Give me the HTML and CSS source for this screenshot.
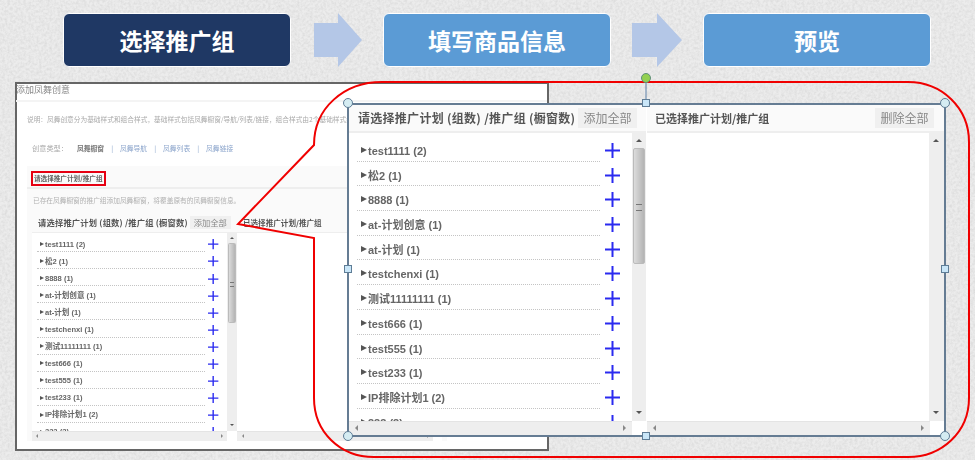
FILE: index.html
```html
<!DOCTYPE html>
<html lang="zh-CN">
<head>
<meta charset="utf-8">
<title>选择推广组</title>
<link rel="stylesheet" href="styles.css">
</head>
<body>
<div class="stage">
  <svg class="texture" width="975" height="460" aria-hidden="true">
    <filter id="grain"><feTurbulence type="fractalNoise" baseFrequency="0.38" numOctaves="3" seed="4"/><feColorMatrix values="0 0 0 0 0.5  0 0 0 0 0.5  0 0 0 0 0.5  0.6 0 0 0 -0.2"/></filter>
    <rect width="975" height="460" filter="url(#grain)"/>
  </svg>

  <nav class="steps">
    <div class="step step-active">选择推广组</div>
    <svg class="arrow arrow-a" viewBox="0 0 48 54" width="48" height="54"><path d="M0 10H24V0L48 27 24 54V44H0Z"/></svg>
    <div class="step">填写商品信息</div>
    <svg class="arrow arrow-b" viewBox="0 0 50 54" width="50" height="54"><path d="M0 10H25V0L50 27 25 54V44H0Z"/></svg>
    <div class="step">预览</div>
  </nav>

  <section class="window">
    <h1 class="window-title">添加凤舞创意</h1>
    <p class="desc">说明：凤舞创意分为基础样式和组合样式，基础样式包括凤舞橱窗/导航/列表/链接，组合样式由2个基础样式组合而成</p>
    <div class="types">
      <span class="type-label">创意类型：</span>
      <span class="type type-on">凤舞橱窗</span><i>|</i>
      <span class="type">凤舞导航</span><i>|</i>
      <span class="type">凤舞列表</span><i>|</i>
      <span class="type">凤舞链接</span>
    </div>
    <div class="section">
      <div class="section-head"><span class="section-title">请选择推广计划/推广组</span></div>
      <p class="note">已存在凤舞橱窗的推广组添加凤舞橱窗，将覆盖原有的凤舞橱窗信息。</p>
      <div class="dual dual-small">
        <div class="col col-left">
          <div class="col-head"><span class="col-title">请选择推广计划 (组数) /推广组 (橱窗数)</span><span class="btn">添加全部</span></div>
          <div class="col-body">
            <ul class="list">
              <li class="row"><span class="name">test1111 (2)</span><svg class="plus" viewBox="0 0 15 15"><path d="M0 7.5H15M7.5 0V15"/></svg></li>
              <li class="row"><span class="name">松2 (1)</span><svg class="plus" viewBox="0 0 15 15"><path d="M0 7.5H15M7.5 0V15"/></svg></li>
              <li class="row"><span class="name">8888 (1)</span><svg class="plus" viewBox="0 0 15 15"><path d="M0 7.5H15M7.5 0V15"/></svg></li>
              <li class="row"><span class="name">at-计划创意 (1)</span><svg class="plus" viewBox="0 0 15 15"><path d="M0 7.5H15M7.5 0V15"/></svg></li>
              <li class="row"><span class="name">at-计划 (1)</span><svg class="plus" viewBox="0 0 15 15"><path d="M0 7.5H15M7.5 0V15"/></svg></li>
              <li class="row"><span class="name">testchenxi (1)</span><svg class="plus" viewBox="0 0 15 15"><path d="M0 7.5H15M7.5 0V15"/></svg></li>
              <li class="row"><span class="name">测试11111111 (1)</span><svg class="plus" viewBox="0 0 15 15"><path d="M0 7.5H15M7.5 0V15"/></svg></li>
              <li class="row"><span class="name">test666 (1)</span><svg class="plus" viewBox="0 0 15 15"><path d="M0 7.5H15M7.5 0V15"/></svg></li>
              <li class="row"><span class="name">test555 (1)</span><svg class="plus" viewBox="0 0 15 15"><path d="M0 7.5H15M7.5 0V15"/></svg></li>
              <li class="row"><span class="name">test233 (1)</span><svg class="plus" viewBox="0 0 15 15"><path d="M0 7.5H15M7.5 0V15"/></svg></li>
              <li class="row"><span class="name">IP排除计划1 (2)</span><svg class="plus" viewBox="0 0 15 15"><path d="M0 7.5H15M7.5 0V15"/></svg></li>
              <li class="row"><span class="name">333 (3)</span><svg class="plus" viewBox="0 0 15 15"><path d="M0 7.5H15M7.5 0V15"/></svg></li>
            </ul>
            <div class="vbar"><span class="up"></span><span class="thumb"></span><span class="down"></span></div>
          </div>
          <div class="hrow"><div class="hbar"><span class="lt"></span><span class="rt"></span></div></div>
        </div>
        <div class="col col-right">
          <div class="col-head"><span class="col-title">已选择推广计划/推广组</span><span class="btn">删除全部</span></div>
          <div class="col-body">
            <div class="empty"></div>
            <div class="vbar"><span class="up"></span><span class="down"></span></div>
          </div>
          <div class="hrow"><div class="hbar"><span class="lt"></span><span class="rt"></span></div></div>
        </div>
      </div>
    </div>
  </section>

  <div class="selection">
    <div class="dual">
      <div class="col col-left">
        <div class="col-head"><span class="col-title">请选择推广计划 (组数) /推广组 (橱窗数)</span><span class="btn">添加全部</span></div>
        <div class="col-body">
          <ul class="list">
            <li class="row"><span class="name">test1111 (2)</span><svg class="plus" viewBox="0 0 15 15"><path d="M0 7.5H15M7.5 0V15"/></svg></li>
            <li class="row"><span class="name">松2 (1)</span><svg class="plus" viewBox="0 0 15 15"><path d="M0 7.5H15M7.5 0V15"/></svg></li>
            <li class="row"><span class="name">8888 (1)</span><svg class="plus" viewBox="0 0 15 15"><path d="M0 7.5H15M7.5 0V15"/></svg></li>
            <li class="row"><span class="name">at-计划创意 (1)</span><svg class="plus" viewBox="0 0 15 15"><path d="M0 7.5H15M7.5 0V15"/></svg></li>
            <li class="row"><span class="name">at-计划 (1)</span><svg class="plus" viewBox="0 0 15 15"><path d="M0 7.5H15M7.5 0V15"/></svg></li>
            <li class="row"><span class="name">testchenxi (1)</span><svg class="plus" viewBox="0 0 15 15"><path d="M0 7.5H15M7.5 0V15"/></svg></li>
            <li class="row"><span class="name">测试11111111 (1)</span><svg class="plus" viewBox="0 0 15 15"><path d="M0 7.5H15M7.5 0V15"/></svg></li>
            <li class="row"><span class="name">test666 (1)</span><svg class="plus" viewBox="0 0 15 15"><path d="M0 7.5H15M7.5 0V15"/></svg></li>
            <li class="row"><span class="name">test555 (1)</span><svg class="plus" viewBox="0 0 15 15"><path d="M0 7.5H15M7.5 0V15"/></svg></li>
            <li class="row"><span class="name">test233 (1)</span><svg class="plus" viewBox="0 0 15 15"><path d="M0 7.5H15M7.5 0V15"/></svg></li>
            <li class="row"><span class="name">IP排除计划1 (2)</span><svg class="plus" viewBox="0 0 15 15"><path d="M0 7.5H15M7.5 0V15"/></svg></li>
            <li class="row"><span class="name">333 (3)</span><svg class="plus" viewBox="0 0 15 15"><path d="M0 7.5H15M7.5 0V15"/></svg></li>
          </ul>
          <div class="vbar"><span class="up"></span><span class="thumb"></span><span class="down"></span></div>
        </div>
        <div class="hrow"><div class="hbar"><span class="lt"></span><span class="rt"></span></div></div>
      </div>
      <div class="col col-right">
        <div class="col-head"><span class="col-title">已选择推广计划/推广组</span><span class="btn">删除全部</span></div>
        <div class="col-body">
          <div class="empty"></div>
          <div class="vbar"><span class="up"></span><span class="down"></span></div>
        </div>
        <div class="hrow"><div class="hbar"><span class="lt"></span><span class="rt"></span></div></div>
      </div>
    </div>
  </div>

  <svg class="overlay" width="975" height="460" aria-hidden="true">
    <path class="callout" d="M238 224 314 238V398C314 432 340 457 374 457H908C942 457 969 432 969 398V142C969 108 942 82 908 82H382C344 82 314 108 314 145Z"/>
    <path class="rot-line" d="M646 83V103"/>
    <circle class="rot" cx="646" cy="78" r="4.5"/>
    <circle class="grip-c" cx="348" cy="103" r="4.5"/>
    <circle class="grip-c" cx="945" cy="103" r="4.5"/>
    <circle class="grip-c" cx="348" cy="436" r="4.5"/>
    <circle class="grip-c" cx="945" cy="436" r="4.5"/>
    <rect class="grip-s" x="642.5" y="99.5" width="7" height="7"/>
    <rect class="grip-s" x="344.5" y="265.5" width="7" height="7"/>
    <rect class="grip-s" x="941.5" y="265.5" width="7" height="7"/>
    <rect class="grip-s" x="642.5" y="432.5" width="7" height="7"/>
  </svg>
</div>
</body>
</html>
```
FILE: styles.css
```css
* { box-sizing: border-box; }
html, body { margin: 0; padding: 0; }
body { background: #e9e9e9; font-family: "Liberation Sans", "Noto Sans CJK SC", sans-serif; }
.stage { position: relative; width: 975px; height: 460px; overflow: hidden; background: #ececec; }
.texture { position: absolute; left: 0; top: 0; }

.steps { position: relative; display: flex; align-items: center; gap: 0; padding: 13px 0 0 63px; }
.step {
  width: 228px; height: 54px; display: flex; align-items: center; justify-content: center;
  background: #5b9bd5; border: 1px solid #fff; border-radius: 6px;
  color: #fff; font: 700 23px/1 "Noto Sans CJK SC", sans-serif;
}
.step-active { background: #1f3864; }
.arrow { flex: none; fill: #b4c7e7; }
.arrow-a { margin: 0 21px 0 23px; }
.arrow-b { margin: 0 21px; }

.window {
  position: absolute; left: 15px; top: 82px; width: 534px; height: 369px;
  background: #fff; border: 2px solid #666; filter: blur(.35px);
  font-family: "Noto Sans CJK SC", sans-serif;
}
.window-title { margin: 0 0 0 -1px; height: 18px; border-bottom: 2px solid #f4f4f4; font-size: 9px; font-weight: 400; line-height: 11px; color: #888; }
.desc { margin: 12px 0 0 10px; font-size: 6.7px; line-height: 10px; color: #aaa; white-space: nowrap; }
.types { display: flex; align-items: center; margin: 18px 0 0 15px; height: 12px; font-size: 6.8px; color: #8da6cc; }
.type-label { color: #aaa; font-size: 7.2px; margin-right: 9px; }
.type-on { color: #777; font-weight: 700; }
.types i { font-style: normal; margin: 0 7px; color: #8da6cc; }
.section { margin: 12px 0 0 10px; width: 420px; height: 275px; background: #fafafa; padding-top: 5px; }
.section-head { display: flex; align-items: flex-start; height: 18px; border-bottom: 2px solid #eee; padding-left: 4px; }
.section-title { height: 15px; padding: 0 1px; border: 2px solid #e60012; font-size: 6.6px; font-weight: 700; line-height: 11px; color: #666; white-space: nowrap; }
.note { margin: 6px 0 0 6px; font-size: 6.7px; line-height: 10px; color: #b0b0b0; white-space: nowrap; }

.selection {
  position: absolute; left: 347px; top: 103px; width: 599px; height: 334px;
  border: 2px solid #657c93; background: #fff;
}
.selection .dual { filter: blur(.3px); }
.dual { display: flex; width: 595px; height: 330px; background: #fff; font-family: "Liberation Sans", "Noto Sans CJK SC", sans-serif; }
.dual-small { zoom: .69; margin: 12px 0 0 7px; filter: blur(.45px); }
.col { display: flex; flex-direction: column; height: 100%; }
.col-left { width: 297px; }
.col-right { width: 298px; margin-left: 1px; }
.col-head { flex: none; height: 28px; display: flex; align-items: center; justify-content: space-between; padding: 0 9px; background: #fafafa; border-bottom: 2px solid #eee; }
.col-right .col-head { padding: 0 10px 0 8px; }
.col-title { font: 700 12px/1 "Noto Sans CJK SC", sans-serif; color: #555; white-space: nowrap; letter-spacing: .28px; }
.col-right .col-title { font-size: 11px; letter-spacing: 0; }
.btn { flex: none; width: 59px; height: 20px; background: #f0f0f0; text-align: center; font: 400 12px/20px "Noto Sans CJK SC", sans-serif; color: #888; }
.col-body { flex: 1; min-height: 0; display: flex; }
.list { flex: none; width: 283px; margin: 0; padding: 4px 0 0 8px; list-style: none; overflow: hidden; }
.row { display: flex; height: 24.7px; }
.name {
  position: relative; width: 243px; height: 24.7px; padding: 8px 0 0 11px;
  border-bottom: 1px dotted #c4c4c4; font-size: 11px; line-height: 13px; font-weight: 700; color: #666; white-space: nowrap;
}
.name::before { content: ""; position: absolute; left: 4px; top: 10px; border-left: 6px solid #555; border-top: 3.5px solid transparent; border-bottom: 3.5px solid transparent; }
.plus { flex: none; width: 15px; height: 15px; margin: 6px 0 0 5px; fill: none; stroke: #2a2af0; stroke-width: 2px; }
.vbar { flex: none; width: 14px; display: flex; flex-direction: column; align-items: center; background: #eee; position: relative; }
.up { height: 15px; flex: none; position: relative; width: 100%; }
.up::before { content: ""; position: absolute; left: 4px; top: 6px; border-bottom: 3px solid #555; border-left: 3px solid transparent; border-right: 3px solid transparent; }
.down { margin-top: auto; height: 15px; flex: none; position: relative; width: 100%; }
.down::before { content: ""; position: absolute; left: 4px; top: 5px; border-top: 3px solid #555; border-left: 3px solid transparent; border-right: 3px solid transparent; }
.thumb { flex: none; width: 12px; height: 116px; background: linear-gradient(90deg, #dcdcdc, #c4c4c4 60%, #b4b4b4); border: 1px solid #bbb; border-radius: 2px; position: relative; }
.thumb::after { content: ""; position: absolute; left: 2px; right: 2px; top: 55px; height: 5px; border-top: 1px solid #777; border-bottom: 1px solid #777; }
.empty { flex: 1; background: #fff; }
.col-right .vbar { width: 15px; }
.hrow { flex: none; height: 14px; display: flex; background: #fff; }
.hbar { position: relative; height: 14px; background: #eee; border-top: 1px solid #e4e4e4; }
.col-left .hbar { width: 283px; }
.col-right .hbar { width: 283px; }
.lt, .rt { position: absolute; top: 3px; }
.lt { left: 6px; border-right: 3px solid #888; border-top: 3px solid transparent; border-bottom: 3px solid transparent; }
.rt { right: 6px; border-left: 3px solid #888; border-top: 3px solid transparent; border-bottom: 3px solid transparent; }

.overlay { position: absolute; left: 0; top: 0; }
.callout { fill: none; stroke: #f00000; stroke-width: 2px; }
.rot-line { stroke: #5b7fa6; stroke-width: 1px; fill: none; }
.rot { fill: #92d050; stroke: #5f8f7a; stroke-width: 1px; }
.grip-c { fill: #d5ecf2; stroke: #5f7d96; stroke-width: 1px; }
.grip-s { fill: #c9e6f8; stroke: #5f7d96; stroke-width: 1px; }
```
